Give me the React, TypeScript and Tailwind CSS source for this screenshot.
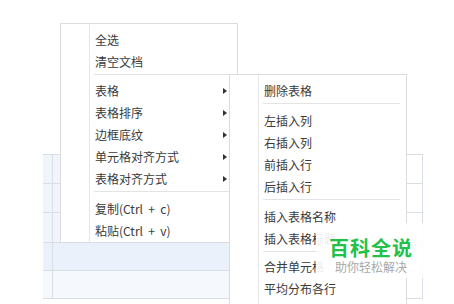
import React from 'react';

type Entry = { label: string; arrow?: boolean } | { sep: number };

const mainMenu: Entry[] = [
  { label: '全选' },
  { label: '清空文档' },
  { sep: 7 },
  { label: '表格', arrow: true },
  { label: '表格排序', arrow: true },
  { label: '边框底纹', arrow: true },
  { label: '单元格对齐方式', arrow: true },
  { label: '表格对齐方式', arrow: true },
  { sep: 8 },
  { label: '复制(Ctrl  +  c)' },
  { label: '粘贴(Ctrl  +  v)' },
];

const tableMenu: Entry[] = [
  { label: '删除表格' },
  { sep: 8 },
  { label: '左插入列' },
  { label: '右插入列' },
  { label: '前插入行' },
  { label: '后插入行' },
  { sep: 8 },
  { label: '插入表格名称' },
  { label: '插入表格标题' },
  { sep: 6 },
  { label: '合并单元格' },
  { label: '平均分布各行' },
  { label: '平均分布各列' },
];

const rows = [
  { h: 'h-[29px]', bg: 'bg-[#f0f4fb]' },
  { h: 'h-[29px]', bg: 'bg-[#f0f4fb]' },
  { h: 'h-[30px]', bg: 'bg-[#f0f4fb]' },
  { h: 'h-[28px]', bg: 'bg-[#ebf1fb]' },
  { h: 'h-[29px] border-b', bg: 'bg-[#f5f8fd]' },
];

function Menu({ items, className }: { items: Entry[]; className: string }) {
  return (
    <div className={`absolute flex w-[178px] border border-[#dcdcdc] bg-white ${className}`}>
      <div className="w-[29px] shrink-0 border-r border-[#e6e6e6]" />
      <div className="flex-1 pt-[5px]">
        {items.map((item, idx) =>
          'sep' in item ? (
            <div key={idx} style={{ height: item.sep }} className="pt-px pl-[4px] pr-[6px]">
              <div className="h-px bg-[#e3e3e3]" />
            </div>
          ) : (
            <div key={idx} className="flex h-[22px] items-center justify-between pl-[5px] pr-[10px] text-[12px] leading-[22px] text-[#3a3a3a]">
              <span className="whitespace-pre">{item.label}</span>
              {item.arrow && (
                <span className="h-0 w-0 border-y-[3.5px] border-l-[4px] border-y-transparent border-l-[#333]" />
              )}
            </div>
          )
        )}
      </div>
    </div>
  );
}

export default function App() {
  return (
    <div
      className="relative h-[304px] w-[454px] overflow-hidden bg-white"
      style={{ fontFamily: '"Noto Sans CJK SC", "Noto Sans", sans-serif' }}
    >
      <div className="pl-[43px] pt-[154px]">
        <div className="w-[380px]">
          {rows.map((row, idx) => (
            <div key={idx} className={`flex border-t border-[#d8dde6] ${row.h}`}>
              <div className={`w-[10px] border-r border-[#d8dde6] ${row.bg}`} />
              <div className={`w-[176px] ${row.bg}`} />
              <div className="flex-1 border-r border-[#d8dde6] bg-white" />
            </div>
          ))}
        </div>
      </div>

      <Menu items={mainMenu} className="left-[60px] top-[23px] h-[220px]" />
      <Menu items={tableMenu} className="left-[229px] top-[74px] h-[260px]" />

      <div className="absolute left-[316px] top-[223px] flex h-[55px] w-[110px] flex-col items-center bg-white/90 pt-[14px]">
        <div className="text-[20px] font-bold leading-[22px] tracking-[1px] text-[#22c14a]">百科全说</div>
        <div className="mt-[1px] text-[12px] leading-[14px] text-[#a8a8a8]">助你轻松解决</div>
      </div>
    </div>
  );
}
